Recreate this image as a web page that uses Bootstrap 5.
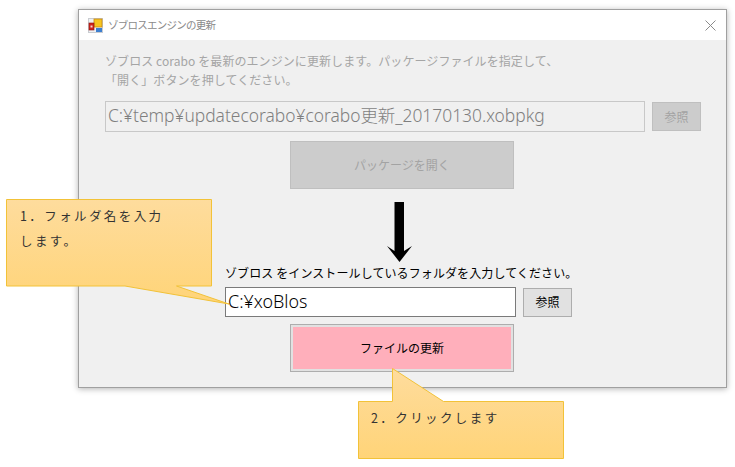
<!DOCTYPE html>
<html lang="ja">
<head>
<meta charset="utf-8">
<link rel="stylesheet" href="https://cdn.jsdelivr.net/npm/bootstrap@5.3.0/dist/css/bootstrap.min.css">
<style>
html,body{background:#fff;margin:0;height:467px;overflow:hidden}
body{font-family:"Noto Sans CJK JP","Noto Sans",sans-serif;font-size:12px;color:#000;position:relative}
.win{margin:9px 0 0 78px;width:649px;height:379px;background:#f0f0f0;border:1px solid #a0a0a0;box-shadow:0 1px 6px rgba(0,0,0,.3)}
.titlebar{height:30px;background:#fff;padding-left:9px;color:#8a8a8a;font-size:10.5px;letter-spacing:-.75px;column-gap:5px}
.closex{margin-left:auto;margin-right:10px}
.body-area{padding:12px 25px 0 26px}
.intro{color:#a5a5a5;line-height:18.5px;height:38px;letter-spacing:.08px}
.path-row{column-gap:7px}
.path-off,.path-on{font-family:"Noto Sans","Noto Sans CJK JP",sans-serif;font-weight:300;display:flex;align-items:center;padding:0 0 2px 2px}
.path-off{width:540px;height:31px;margin-top:11px;border:1px solid #c8c8c8;background:#f0f0f0;color:#7f7f7f;font-size:17.4px;flex:none}
.path-off+.ref-btn{margin-top:11px}
.ref-btn{width:49px;height:29px;border:1px solid #adadad;background:#e1e1e1;font-size:12px;line-height:1;padding:0;border-radius:0;color:#000}
.btn.ref-off,.btn.ref-off:disabled{background:#ccc;border-color:#bfbfbf;color:#a3a3a3;opacity:1}
.big-btn{display:block;width:224px;height:48px;border-radius:0;padding:0;font-size:12px;line-height:1;margin-left:185px}
.btn.open-btn,.btn.open-btn:disabled{background:#ccc;border:1px solid #bfbfbf;color:#a3a3a3;opacity:1;margin-top:9px}
.folder-label{margin:77px 0 7px 120px;line-height:14px;height:14px;white-space:nowrap;letter-spacing:.1px}
.lower-row{margin-left:120px}
.path-on{width:291px;height:30px;background:#fff;border:1px solid #7a7a7a;font-size:17.9px;color:#000;flex:none}
.btn.update-btn{background:#ffafbb;border:1px solid #adadad;box-shadow:inset 0 0 0 2px #e1e1e1;color:#000;margin-top:7px}
.callout{position:absolute;font-size:12.5px;color:#333;letter-spacing:2.4px;line-height:25px;white-space:nowrap}
.callout-a{left:20px;top:203px}
.callout-b{left:371px;top:405px}
.shapes{position:absolute;left:0;top:0}
</style>
</head>
<body>
<div class="win d-flex flex-column">
  <div class="titlebar d-flex align-items-center">
    <svg width="15" height="15" viewBox="0 0 15 15" aria-hidden="true"><rect x=".5" y=".5" width="14" height="14" fill="#eef0f3" stroke="#c9ccd1"/><rect x="6" y="1" width="8" height="8" fill="#f7c51e" stroke="#c98a12" stroke-width=".8"/><rect x="1" y="5" width="5" height="7" fill="#d0241c" stroke="#8a1410" stroke-width=".6"/><rect x="2.500" y="7.500" width="2" height="2" fill="#f6d6d0"/><rect x="8" y="10" width="6" height="4" fill="#3d7fd0"/></svg>
    <span>ゾブロスエンジンの更新</span>
    <svg class="closex" width="11" height="11" viewBox="0 0 11 11" aria-hidden="true"><path d="M.5.5l10 10M10.500.5l-10 10" stroke="#8a8a8a" stroke-width="1" fill="none"/></svg>
  </div>
  <div class="body-area">
    <div class="intro">ゾブロス corabo を最新のエンジンに更新します。パッケージファイルを指定して、<br>「開く」ボタンを押してください。</div>
    <div class="d-flex align-items-center path-row">
      <div class="path-off">C:¥temp¥updatecorabo¥corabo更新_20170130.xobpkg</div>
      <button type="button" class="btn ref-btn ref-off" disabled>参照</button>
    </div>
    <button type="button" class="btn big-btn open-btn" disabled>パッケージを開く</button>
    <div class="folder-label">ゾブロス をインストールしているフォルダを入力してください。</div>
    <div class="d-flex align-items-center path-row lower-row">
      <div class="path-on">C:¥xoBlos</div>
      <button type="button" class="btn ref-btn">参照</button>
    </div>
    <button type="button" class="btn big-btn update-btn">ファイルの更新</button>
  </div>
</div>
<svg class="shapes" width="735" height="467" viewBox="0 0 735 467" aria-hidden="true">
  <defs>
    <linearGradient id="g1" x1="0" y1="0" x2="0" y2="1"><stop offset="0" stop-color="#fedc9d"/><stop offset="1" stop-color="#ffd478"/></linearGradient>
  </defs>
  <path d="M394.500 202h9.500v49l8-5-12.500 16-12.500-16 7.500 5z" fill="#000"/>
  <path d="M6.500 199.500h205v86.500h-35l52.500 18-104-18h-118.500z" fill="url(#g1)" stroke="#f2c238" stroke-width="1"/>
  <path d="M358.500 401.500h34v-33l51 33h120v57h-205z" fill="url(#g1)" stroke="#f2c238" stroke-width="1"/>
</svg>
<div class="callout callout-a">1．フォルダ名を入力<br>します。</div>
<div class="callout callout-b">2．クリックします</div>
</body>
</html>
